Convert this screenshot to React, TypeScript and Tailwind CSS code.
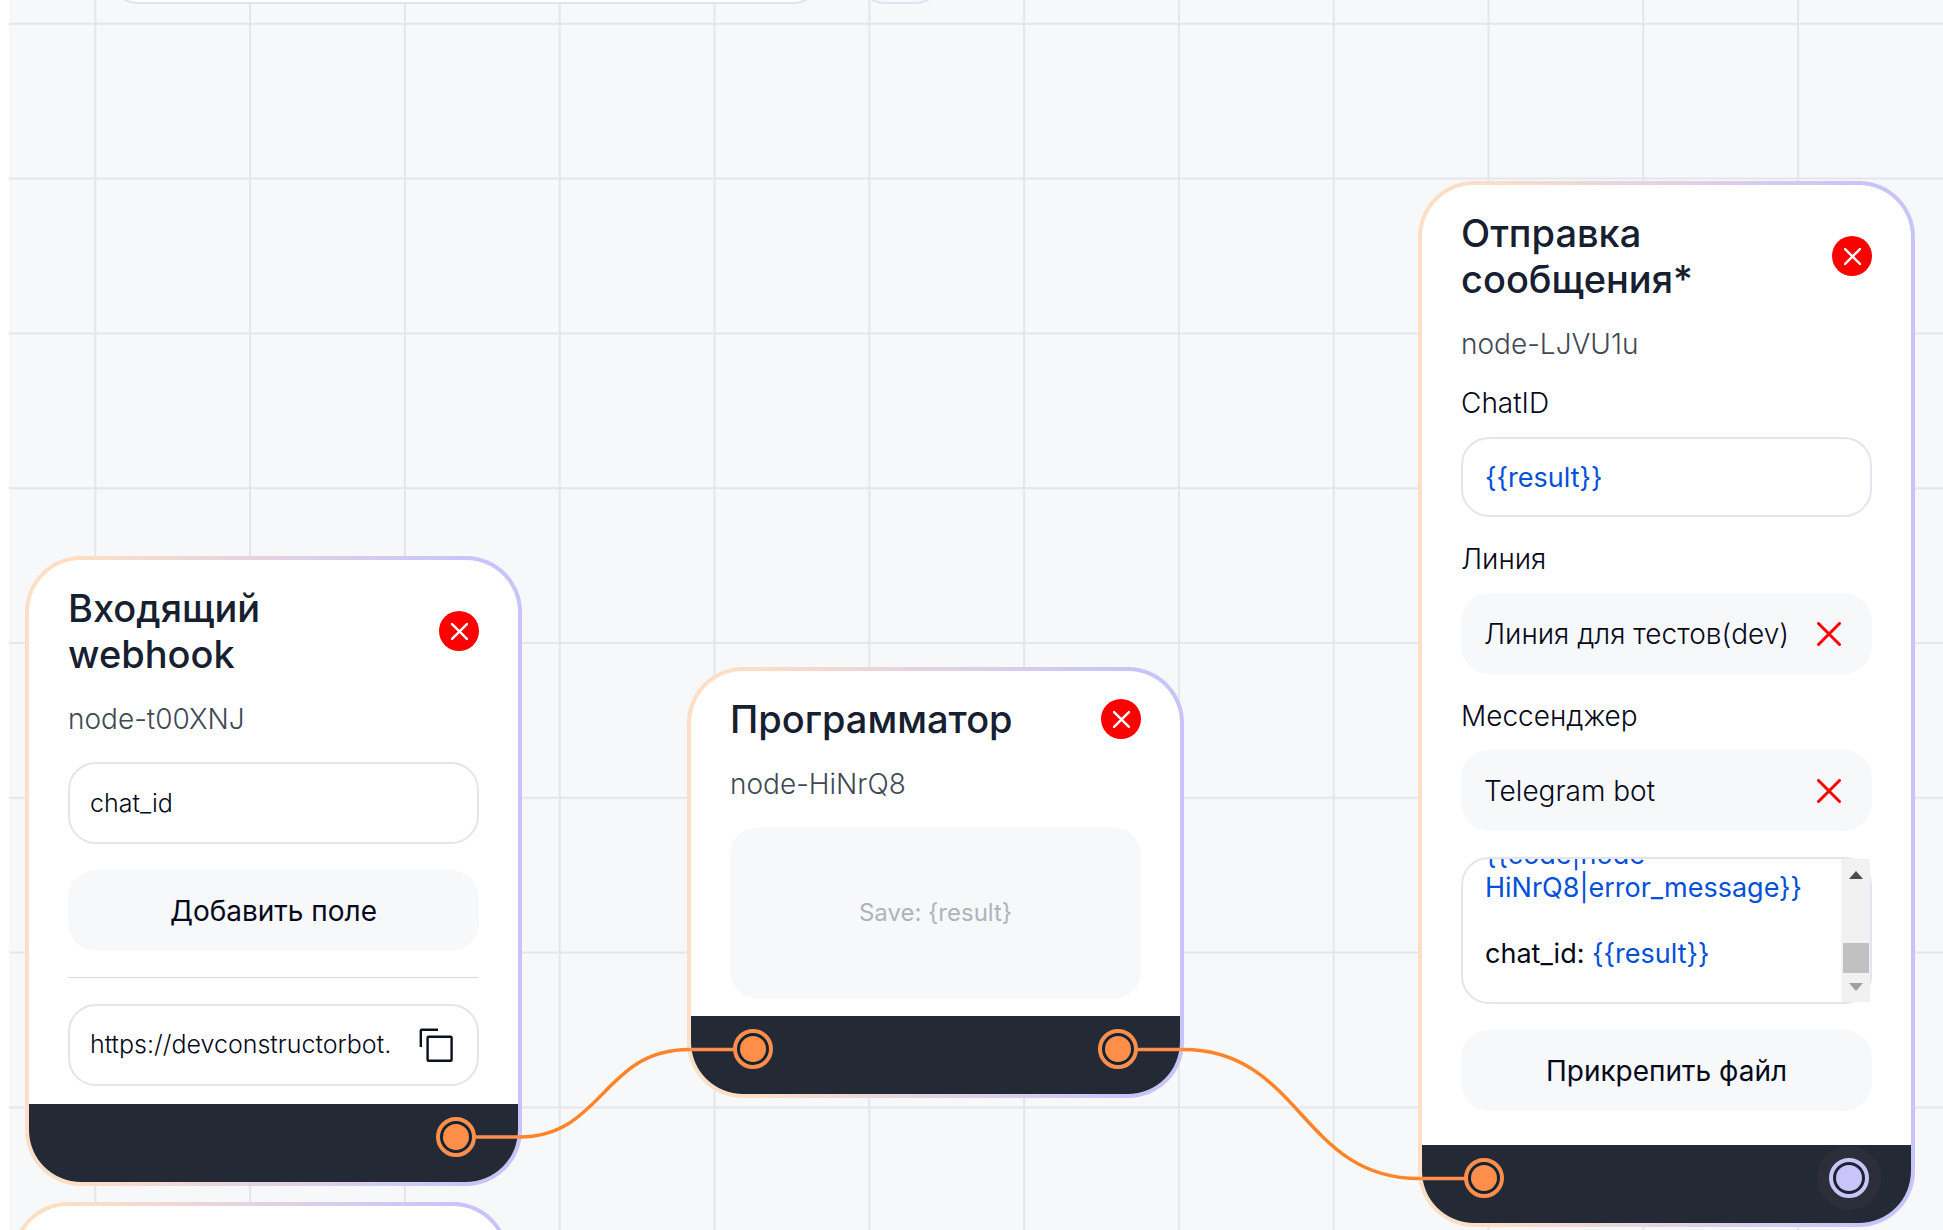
import type { ReactNode } from "react";

const GRID_STEP = 154.8;
const GRID_COLUMNS = 13;
const GRID_ROWS = 8;

type PortKind = "linked" | "free";

type NodeCardProps = {
  title: string;
  nodeId: string;
  position: string;
  input?: PortKind;
  output?: PortKind;
  bodyClass: string;
  children?: ReactNode;
};

function Cross({ className }: { className: string }) {
  return (
    <svg viewBox="0 0 24 24" fill="none" stroke="currentColor" strokeLinecap="round" className={className} aria-hidden="true">
      <path d="M1.5 1.5 22.5 22.5M22.5 1.5 1.5 22.5" />
    </svg>
  );
}

function CopyIcon() {
  return (
    <svg viewBox="0 0 34 34" fill="none" stroke="#0b1020" strokeWidth="2.4" className="size-[34px]" aria-hidden="true">
      <path d="M19 1.8H2.6a.8.8 0 0 0-.8.8V19" />
      <rect x="8.6" y="8.8" width="24" height="24" rx="1" />
    </svg>
  );
}

function Port({ kind, label }: { kind: PortKind; label: string }) {
  return (
    <button
      type="button"
      aria-label={label}
      className={
        kind === "linked"
          ? "flex size-10 items-center justify-center rounded-full border-4 border-[#ff8e4a] bg-[#0f2434]"
          : "flex size-10 items-center justify-center rounded-full border-4 border-[#c9c4f9] bg-[#1b2430] ring-[12px] ring-[#2c2e3a]"
      }
    >
      <span className={kind === "linked" ? "size-[26px] rounded-full bg-[#ff8e4a]" : "size-[26px] rounded-full bg-[#c9c4f9]"} />
    </button>
  );
}

function NodeCard({ title, nodeId, position, input, output, bodyClass, children }: NodeCardProps) {
  return (
    <article className={`absolute w-[497px] rounded-[56px] bg-linear-to-r from-[#fddfc5] from-10% to-[#c8c4fa] to-90% p-1 ${position}`}>
      <div className="flex flex-col overflow-hidden rounded-[52px] bg-white">
        <div className={`flex flex-col gap-[26px] px-[39px] pt-[25px] ${bodyClass}`}>
          <header className="flex items-center justify-between">
            <h2 className="w-[300px] text-[38px] leading-[46px] font-medium text-[#172030]">{title}</h2>
            <button type="button" aria-label="Удалить" className="flex size-10 items-center justify-center rounded-full bg-[#ff0000] text-white">
              <Cross className="size-[17px] stroke-[3.4]" />
            </button>
          </header>
          <p className="text-[28px] leading-[33px] font-light text-[#414954]">{nodeId}</p>
          {children}
        </div>
        <footer className="flex h-[78px] items-start justify-between bg-[#242a35] px-[42px] pt-[13px]">
          {input ? <Port kind={input} label="Вход" /> : <span />}
          {output ? <Port kind={output} label="Выход" /> : <span />}
        </footer>
      </div>
    </article>
  );
}

function SelectField({ id, label, value }: { id: string; label: string; value: string }) {
  return (
    <div className="flex flex-col gap-[17px]">
      <label htmlFor={id} className="text-[28px] leading-[33px] font-light text-[#05091a]">
        {label}
      </label>
      <div className="flex h-[81px] items-center rounded-[28px] bg-[#f7f8fa] pr-[31px] pl-[23px]">
        <select id={id} className="min-w-0 flex-1 appearance-none bg-transparent text-[28px] font-light text-[#05091a] outline-none">
          <option>{value}</option>
        </select>
        <button type="button" aria-label="Очистить" className="text-[#ff0000]">
          <Cross className="size-6 stroke-3" />
        </button>
      </div>
    </div>
  );
}

function Grid() {
  return (
    <svg className="absolute inset-0 size-full" stroke="#e4e5ed" strokeWidth="2" aria-hidden="true">
      {Array.from({ length: GRID_COLUMNS }, (_, i) => (
        <line key={`c${i}`} x1={86.3 + i * GRID_STEP} x2={86.3 + i * GRID_STEP} y1="0" y2="100%" />
      ))}
      {Array.from({ length: GRID_ROWS }, (_, i) => (
        <line key={`r${i}`} x1="0" x2="100%" y1={23.8 + i * GRID_STEP} y2={23.8 + i * GRID_STEP} />
      ))}
    </svg>
  );
}

function Edges() {
  return (
    <svg className="pointer-events-none absolute inset-0 size-full" fill="none" strokeWidth="3.5" aria-hidden="true">
      <g stroke="#ff8429">
        <path d="M510 1137C594 1137 594 1049.5 680 1049.5" />
        <path d="M1174 1049.5C1292 1049.5 1292 1178.5 1410 1178.5" />
      </g>
      <g stroke="#ff8e4a">
        <path d="M465 1137H510" />
        <path d="M680 1049.5H726" />
        <path d="M1127 1049.5H1174" />
        <path d="M1410 1178.5H1456" />
      </g>
    </svg>
  );
}

function MessageEditor() {
  return (
    <div className="relative h-[147px] rounded-[28px] border-2 border-[#e4e4ee]">
      <div
        role="textbox"
        aria-multiline="true"
        aria-label="Текст сообщения"
        contentEditable
        suppressContentEditableWarning
        className="flex h-full flex-col justify-end overflow-hidden pr-8 pb-8 pl-[22px] text-[27px] leading-[33px] whitespace-nowrap text-[#05091a] outline-none"
      >
        <p className="text-[#0450d8]">{"{{code|node-"}</p>
        <p className="text-[#0450d8]">{"HiNrQ8|error_message}}"}</p>
        <p>&nbsp;</p>
        <p>
          chat_id: <span className="text-[#0450d8]">{"{{result}}"}</span>
        </p>
      </div>
      {/* scrollbar sits over the rounded corners */}
      <div className="absolute inset-y-0 right-0 flex w-[29px] flex-col items-center bg-[#f1f1f1]">
        <svg viewBox="0 0 14 8" className="mt-3 h-2 w-3.5" aria-hidden="true">
          <path d="M0 8 7 0l7 8z" fill="#4c4c4c" />
        </svg>
        <span className="mt-auto h-[30px] w-[26px] bg-[#c1c1c1]" />
        <svg viewBox="0 0 14 8" className="mt-2.5 mb-[11px] h-2 w-3.5" aria-hidden="true">
          <path d="M0 0h14L7 8z" fill="#a0a0a0" />
        </svg>
      </div>
    </div>
  );
}

export default function App() {
  return (
    <main className="h-screen bg-white pl-[9px] font-['Inter',sans-serif]">
      <div className="relative h-full overflow-hidden bg-[#f7f8fa]">
        <Grid />
        <div className="absolute -top-20 left-[101px] h-[84px] w-[711px] rounded-[28px] border-2 border-[#e2e3ef] bg-white" />
        <button type="button" aria-label="Меню" className="absolute -top-20 left-[848px] h-[84px] w-[86px] rounded-[28px] border-2 border-[#e2e3ef]" />

        <NodeCard title="Входящий webhook" nodeId="node-t00XNJ" position="top-[556px] left-4" output="linked" bodyClass="pb-[18px]">
          <input
            aria-label="Имя поля"
            defaultValue="chat_id"
            className="h-[82px] w-full rounded-[28px] border-2 border-[#e4e4ee] px-5 text-[25px] font-light text-[#05091a] outline-none"
          />
          <button type="button" className="h-[81px] rounded-[28px] bg-[#f7f8fa] text-[28px] text-[#05091a]">
            Добавить поле
          </button>
          <hr className="border-[#d9dade]" />
          <div className="flex h-[82px] items-center rounded-[28px] border-2 border-[#e4e4ee] pr-6 pl-5">
            <input
              aria-label="Адрес webhook"
              readOnly
              defaultValue="https://devconstructorbot."
              className="min-w-0 flex-1 bg-transparent text-[25px] font-light text-[#05091a] outline-none"
            />
            <button type="button" aria-label="Копировать">
              <CopyIcon />
            </button>
          </div>
        </NodeCard>

        <NodeCard
          title="Программатор"
          nodeId="node-HiNrQ8"
          position="top-[667px] left-[678px]"
          input="linked"
          output="linked"
          bodyClass="pb-[17px]"
        >
          <div className="flex h-[172px] items-center justify-center rounded-[28px] bg-[#f7f8fa] text-2xl text-[#b0b3b9]">
            {"Save: {result}"}
          </div>
        </NodeCard>

        <NodeCard
          title="Отправка сообщения*"
          nodeId="node-LJVU1u"
          position="top-[181px] left-[1409px]"
          input="linked"
          output="free"
          bodyClass="pb-[34px]"
        >
          <div className="flex flex-col gap-[17px]">
            <label htmlFor="chat-id" className="text-[28px] leading-[33px] font-light text-[#05091a]">
              ChatID
            </label>
            <input
              id="chat-id"
              defaultValue="{{result}}"
              className="h-20 w-full rounded-[28px] border-2 border-[#e4e4ee] px-[22px] text-[27px] text-[#0450d8] outline-none"
            />
          </div>
          <SelectField id="line" label="Линия" value="Линия для тестов(dev)" />
          <SelectField id="messenger" label="Мессенджер" value="Telegram bot" />
          <MessageEditor />
          <button type="button" className="h-[81px] rounded-[28px] bg-[#f7f8fa] text-[28px] text-[#05091a]">
            Прикрепить файл
          </button>
        </NodeCard>

        {/* next node, only its top edge is in view */}
        <div className="absolute top-[1202px] left-[3px] h-40 w-[497px] rounded-[56px] bg-linear-to-r from-[#fddfc5] from-10% to-[#c8c4fa] to-90% p-1">
          <div className="h-full rounded-[52px] bg-white" />
        </div>

        <Edges />
      </div>
    </main>
  );
}
